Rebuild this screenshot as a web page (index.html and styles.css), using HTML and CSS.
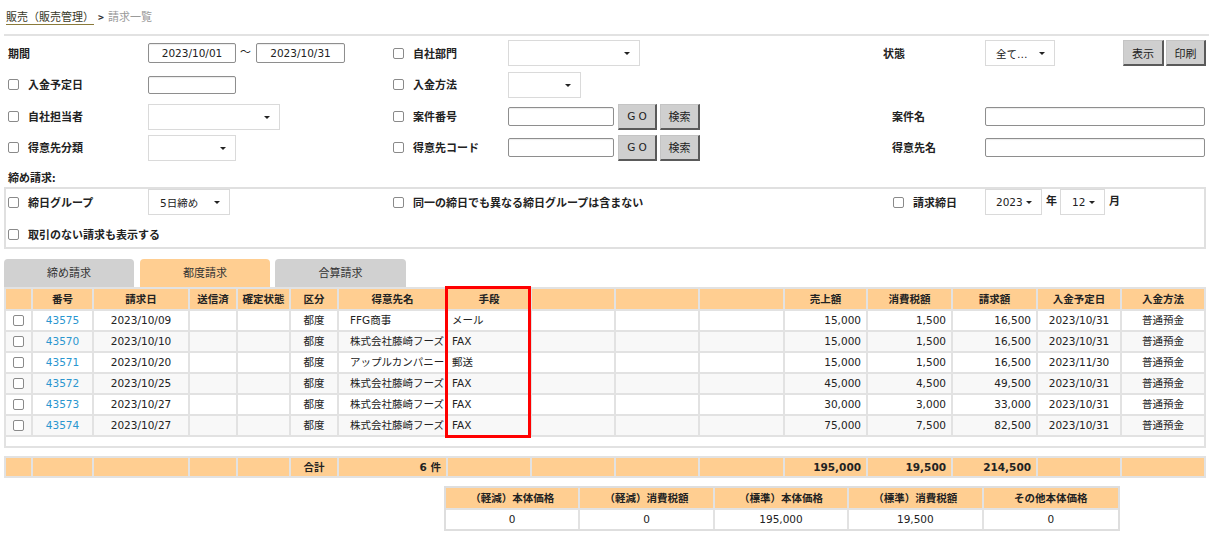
FILE: index.html
```html
<!DOCTYPE html>
<html lang="ja">
<head>
<meta charset="utf-8">
<title>請求一覧</title>
<link rel="stylesheet" href="styles.css">
</head>
<body>
<div class="page">
  <div class="breadcrumb"><a class="crumb">販売（販売管理）</a><span class="sep">&gt;</span><span class="current">請求一覧</span></div>

  <div class="filters">
    <div class="lbl">期間</div>
    <div class="ctl"><span class="input w88">2023/10/01</span><span class="tilde">～</span><span class="input w89">2023/10/31</span></div>
    <div class="lbl"><span class="cb"></span>自社部門</div>
    <div class="ctl"><span class="select w132"></span></div>
    <div class="lbl">状態</div>
    <div class="ctl spread"><span class="select w70">全て…</span><span class="btns"><span class="btn w41">表示</span><span class="btn w40">印刷</span></span></div>

    <div class="lbl"><span class="cb"></span>入金予定日</div>
    <div class="ctl"><span class="input w88 h18"></span></div>
    <div class="lbl"><span class="cb"></span>入金方法</div>
    <div class="ctl"><span class="select w73"></span></div>
    <div class="lbl"></div>
    <div class="ctl"></div>

    <div class="lbl"><span class="cb"></span>自社担当者</div>
    <div class="ctl"><span class="select w132"></span></div>
    <div class="lbl"><span class="cb"></span>案件番号</div>
    <div class="ctl"><span class="input w106 h19"></span><span class="btn w39 go">GO</span><span class="btn w40">検索</span></div>
    <div class="lbl ind">案件名</div>
    <div class="ctl"><span class="input w220 h19"></span></div>

    <div class="lbl"><span class="cb"></span>得意先分類</div>
    <div class="ctl"><span class="select w88"></span></div>
    <div class="lbl"><span class="cb"></span>得意先コード</div>
    <div class="ctl"><span class="input w106 h19"></span><span class="btn w39 go">GO</span><span class="btn w40">検索</span></div>
    <div class="lbl ind">得意先名</div>
    <div class="ctl"><span class="input w220 h19"></span></div>
  </div>

  <div class="section-label">締め請求:</div>
  <div class="closing">
    <div class="lbl"><span class="cb"></span>締日グループ</div>
    <div class="ctl"><span class="select w82 sp11">5日締め</span></div>
    <div class="lbl wide"><span class="cb"></span>同一の締日でも異なる締日グループは含まない</div>
    <div class="lbl ind2"><span class="cb"></span>請求締日</div>
    <div class="ctl"><span class="select w57">2023</span><span class="unit">年</span><span class="select w45 sp11">12</span><span class="unit">月</span></div>

    <div class="lbl r2 full"><span class="cb"></span>取引のない請求も表示する</div>
  </div>

  <div class="tabs">
    <div class="tab">締め請求</div>
    <div class="tab active">都度請求</div>
    <div class="tab last">合算請求</div>
  </div>

  <div class="grid-wrap">
    <table class="grid">
      <colgroup>
        <col class="c1"><col class="c2"><col class="c3"><col class="c4"><col class="c5"><col class="c6"><col class="c7"><col class="c8"><col class="c9"><col class="c10"><col class="c11"><col class="c12"><col class="c13"><col class="c14"><col class="c15"><col class="c16">
      </colgroup>
      <thead>
        <tr><th></th><th>番号</th><th>請求日</th><th>送信済</th><th>確定状態</th><th>区分</th><th>得意先名</th><th>手段</th><th></th><th></th><th></th><th>売上額</th><th>消費税額</th><th>請求額</th><th>入金予定日</th><th>入金方法</th></tr>
      </thead>
      <tbody>
        <tr><td class="c"><span class="tcb"></span></td><td class="c"><a class="link">43575</a></td><td class="c">2023/10/09</td><td></td><td></td><td class="c">都度</td><td class="name">FFG商事</td><td class="l">メール</td><td></td><td></td><td></td><td class="r">15,000</td><td class="r">1,500</td><td class="r">16,500</td><td class="c">2023/10/31</td><td class="c">普通預金</td></tr>
        <tr><td class="c"><span class="tcb"></span></td><td class="c"><a class="link">43570</a></td><td class="c">2023/10/10</td><td></td><td></td><td class="c">都度</td><td class="name">株式会社藤崎フーズ</td><td class="l">FAX</td><td></td><td></td><td></td><td class="r">15,000</td><td class="r">1,500</td><td class="r">16,500</td><td class="c">2023/10/31</td><td class="c">普通預金</td></tr>
        <tr><td class="c"><span class="tcb"></span></td><td class="c"><a class="link">43571</a></td><td class="c">2023/10/20</td><td></td><td></td><td class="c">都度</td><td class="name">アップルカンパニー</td><td class="l">郵送</td><td></td><td></td><td></td><td class="r">15,000</td><td class="r">1,500</td><td class="r">16,500</td><td class="c">2023/11/30</td><td class="c">普通預金</td></tr>
        <tr><td class="c"><span class="tcb"></span></td><td class="c"><a class="link">43572</a></td><td class="c">2023/10/25</td><td></td><td></td><td class="c">都度</td><td class="name">株式会社藤崎フーズ</td><td class="l">FAX</td><td></td><td></td><td></td><td class="r">45,000</td><td class="r">4,500</td><td class="r">49,500</td><td class="c">2023/10/31</td><td class="c">普通預金</td></tr>
        <tr><td class="c"><span class="tcb"></span></td><td class="c"><a class="link">43573</a></td><td class="c">2023/10/27</td><td></td><td></td><td class="c">都度</td><td class="name">株式会社藤崎フーズ</td><td class="l">FAX</td><td></td><td></td><td></td><td class="r">30,000</td><td class="r">3,000</td><td class="r">33,000</td><td class="c">2023/10/31</td><td class="c">普通預金</td></tr>
        <tr><td class="c"><span class="tcb"></span></td><td class="c"><a class="link">43574</a></td><td class="c">2023/10/27</td><td></td><td></td><td class="c">都度</td><td class="name">株式会社藤崎フーズ</td><td class="l">FAX</td><td></td><td></td><td></td><td class="r">75,000</td><td class="r">7,500</td><td class="r">82,500</td><td class="c">2023/10/31</td><td class="c">普通預金</td></tr>
      </tbody>
    </table>
  </div>

  <div class="total-wrap">
    <table class="grid total">
      <colgroup>
        <col class="c1"><col class="c2"><col class="c3"><col class="c4"><col class="c5"><col class="c6"><col class="c7"><col class="c8"><col class="c9"><col class="c10"><col class="c11"><col class="c12"><col class="c13"><col class="c14"><col class="c15"><col class="c16">
      </colgroup>
      <tbody>
        <tr><td></td><td></td><td></td><td></td><td></td><td class="c">合計</td><td class="r">6 件</td><td></td><td></td><td></td><td></td><td class="r">195,000</td><td class="r">19,500</td><td class="r">214,500</td><td></td><td></td></tr>
      </tbody>
    </table>
  </div>

  <div class="sum-wrap">
    <table class="sum">
      <thead>
        <tr><th>（軽減）本体価格</th><th>（軽減）消費税額</th><th>（標準）本体価格</th><th>（標準）消費税額</th><th>その他本体価格</th></tr>
      </thead>
      <tbody>
        <tr><td>0</td><td>0</td><td>195,000</td><td>19,500</td><td>0</td></tr>
      </tbody>
    </table>
  </div>

  <div class="mark"></div>
</div>
</body>
</html>
```

FILE: styles.css
```css
* { box-sizing: border-box; }
html, body { margin: 0; padding: 0; background: #fff; }
body {
  font-family: "DejaVu Sans", "Noto Sans CJK JP", sans-serif;
  font-size: 11px;
  color: #222;
}
.page { position: relative; width: 1209px; height: 540px; overflow: hidden; }

/* breadcrumb */
.breadcrumb {
  height: 36px;
  margin-left: 4px;
  padding: 9px 0 0 2px;
  line-height: 14px;
  border-bottom: 2px solid #e2e2e2;
  font-family: "Noto Sans CJK JP", sans-serif;
}
.crumb { color: #3a3a2a; text-decoration: underline; text-decoration-color: #8a7a3a; text-underline-offset: 3px; }
.sep { color: #333; margin: 0 4px 0 4px; font-weight: bold; font-size: 10px; }
.current { color: #9a9a9a; }

/* filter grid */
.filters {
  display: grid;
  grid-template-columns: 140px 245px 115px 375px 102px 221px;
  grid-template-rows: 30px 33px 31px 31px;
  margin: 2px 0 0 8px;
  align-items: center;
}
.lbl {
  display: flex;
  align-items: center;
  font-weight: bold;
  font-family: "Noto Sans CJK JP", sans-serif;
  white-space: nowrap;
  line-height: 17px;
}
.lbl.ind { padding-left: 9px; }
.lbl.ind2 { padding-left: 10px; }
.cb {
  width: 11px; height: 11px;
  border: 1px solid #8a8a8a;
  border-radius: 2px;
  margin-right: 9px;
  background: #fff;
  flex: none;
}
.ctl { display: flex; align-items: center; }
.ctl.spread { justify-content: space-between; }

.input {
  display: flex; align-items: center; justify-content: center;
  height: 20px;
  border: 1px solid #8e8e8e;
  border-radius: 2px;
  background: #fff;
  font-size: 10.5px;
  box-shadow: inset 0 1px 1px rgba(0,0,0,0.08);
}
.input.h18 { height: 18px; }
.input.h19 { height: 19px; }
.tilde { margin: 0 5px 0 4px; font-family: "Noto Sans CJK JP", sans-serif; font-size: 11px; position: relative; top: -2px; }

.select {
  position: relative;
  display: flex; align-items: center;
  height: 26px;
  padding-left: 10px;
  border: 1px solid #dadada;
  background: #fff;
  font-size: 10.5px;
}
.select.sp11 { padding-left: 11px; }
.select::after {
  content: "";
  position: absolute;
  right: 9px; top: 11px;
  border-left: 3px solid transparent;
  border-right: 3px solid transparent;
  border-top: 3px solid #222;
}
.w39 { width: 39px; } .w40 { width: 40px; } .w41 { width: 41px; }
.w45 { width: 45px; } .w57 { width: 57px; } .w70 { width: 70px; }
.w73 { width: 73px; } .w82 { width: 82px; } .w88 { width: 88px; } .w89 { width: 89px; }
.w106 { width: 106px; } .w132 { width: 132px; } .w220 { width: 220px; }

.btns { display: flex; gap: 2px; }
.btn {
  display: flex; align-items: center; justify-content: center;
  height: 26px;
  background: #cfcfcf;
  border: 1px solid #c4c4c4;
  border-right: 2px solid #5a5a5a;
  border-bottom: 2px solid #5a5a5a;
  font-family: "Noto Sans CJK JP", sans-serif;
  font-size: 11px;
  color: #222;
  margin-left: 3px;
}
.btns .btn { margin-left: 0; }
.btn.go { margin-left: 4px; font-family: "DejaVu Sans", sans-serif; letter-spacing: 3px; padding-left: 3px; font-size: 10.5px; }

.section-label {
  margin: 6px 0 0 8px;
  font-weight: bold;
  line-height: 17px;
  font-family: "Noto Sans CJK JP", sans-serif;
}
.closing {
  display: grid;
  grid-template-columns: 140px 245px 115px 375px 102px 219px;
  grid-template-rows: 26px 32px;
  align-items: center;
  margin: 1px 3px 0 4px;
  padding-left: 2px;
  border: 2px solid #e0e0e0;
}
.closing .wide { grid-column: 3 / 5; }
.closing .full { grid-column: 1 / 7; }
.lbl.r2 { padding-top: 6px; }
.unit { font-weight: bold; font-family: "Noto Sans CJK JP", sans-serif; margin: -4px 3px 0 4px; }

/* tabs */
.tabs { display: flex; margin: 10px 0 0 4px; height: 28px; }
.tab {
  width: 130px;
  height: 28px;
  margin-right: 6px;
  background: #d1d1d1;
  border-radius: 4px 4px 0 0;
  display: flex; align-items: center; justify-content: center;
  font-family: "Noto Sans CJK JP", sans-serif;
  color: #333;
  padding-bottom: 2px;
}
.tab.active { background: #ffce91; margin-right: 5px; }
.tab.last { width: 131px; }

/* tables */
.grid-wrap {
  margin: 0 3px 0 4px;
  height: 161px;
  border: 2px solid #e2e2e2;
}
.total-wrap {
  margin: 8px 3px 0 4px;
  border: 2px solid #e2e2e2;
}
.grid {
  width: 1198px;
  table-layout: fixed;
  border-collapse: separate;
  border-spacing: 0;
}
.c1 { width: 27px; } .c2 { width: 61px; } .c3 { width: 96px; } .c4 { width: 48px; }
.c5 { width: 53px; } .c6 { width: 48px; } .c7 { width: 109px; } .c8 { width: 84px; }
.c9 { width: 84px; } .c10 { width: 84px; } .c11 { width: 85px; } .c12 { width: 83px; }
.c13 { width: 85px; } .c14 { width: 85px; } .c15 { width: 84px; } .c16 { width: 82px; }

.grid th, .grid td {
  border-right: 2px solid #e2e2e2;
  border-bottom: 2px solid #e2e2e2;
  padding: 0 5px;
  height: 21px;
  line-height: 19px;
  white-space: nowrap;
  overflow: hidden;
  font-size: 10.5px;
  font-weight: normal;
}
.grid th:last-child, .grid td:last-child { border-right: none; }
.grid th {
  background: #ffce91;
  height: 22px;
  line-height: 20px;
  font-weight: bold;
  text-align: center;
  padding: 0 1px;
  font-family: "Noto Sans CJK JP", sans-serif;
}
.grid tbody tr:nth-child(even) td { background: #f8f8f8; }
.grid td.c { text-align: center; }
.grid td.r { text-align: right; }
.grid td.l { text-align: left; padding-left: 4px; }
.grid td.name { padding-left: 11px; padding-right: 0; }
.link { color: #2a96cf; text-decoration: none; }
.tcb {
  display: inline-block;
  width: 11px; height: 11px;
  border: 1px solid #8a8a8a;
  border-radius: 2px;
  background: #fff;
  vertical-align: middle;
  position: relative; top: -1px;
}

.grid.total td {
  background: #ffce91;
  border-bottom: none;
  height: 18px;
  line-height: 18px;
  font-weight: bold;
}

.sum-wrap {
  margin: 8px 0 0 444px;
  width: 676px;
  border: 2px solid #dedede;
}
.sum {
  width: 672px;
  table-layout: fixed;
  border-collapse: separate;
  border-spacing: 0;
}
.sum th, .sum td {
  border-right: 2px solid #e2e2e2;
  text-align: center;
  font-size: 10.5px;
  white-space: nowrap;
  padding: 0;
}
.sum th:last-child, .sum td:last-child { border-right: none; }
.sum th {
  background: #ffce91;
  font-weight: bold;
  height: 22px;
  line-height: 20px;
  border-bottom: 2px solid #e2e2e2;
  font-family: "Noto Sans CJK JP", sans-serif;
}
.sum td { height: 19px; line-height: 19px; }

/* annotation */
.mark {
  position: absolute;
  left: 445px; top: 286px;
  width: 86px; height: 152px;
  border: 3px solid #ff0000;
}
```
